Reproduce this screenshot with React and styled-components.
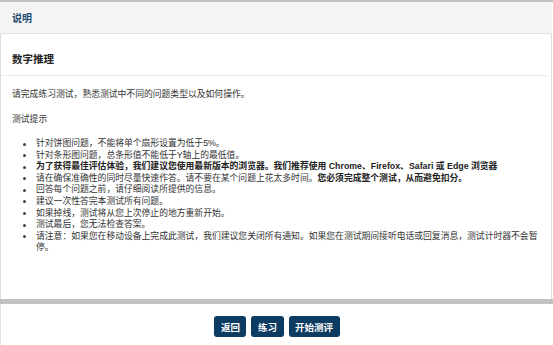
import React from "react";
import styled, { createGlobalStyle } from "styled-components";

const GlobalStyle = createGlobalStyle`
  html, body {
    margin: 0;
    padding: 0;
    background: #fff;
  }
  body {
    font-family: "Liberation Sans", "Noto Sans CJK SC", sans-serif;
    color: #333;
  }
`;

const tips = [
  { text: "针对饼图问题，不能将单个扇形设置为低于5%。" },
  { text: "针对条形图问题，总条形值不能低于Y轴上的最低值。" },
  {
    text: "为了获得最佳评估体验，我们建议您使用最新版本的浏览器。我们推荐使用 Chrome、Firefox、Safari 或 Edge 浏览器",
    strong: true,
  },
  {
    text: "请在确保准确性的同时尽量快速作答。请不要在某个问题上花太多时间。",
    extra: "您必须完成整个测试，从而避免扣分。",
  },
  { text: "回答每个问题之前，请仔细阅读所提供的信息。" },
  { text: "建议一次性答完本测试所有问题。" },
  { text: "如果掉线，测试将从您上次停止的地方重新开始。" },
  { text: "测试最后，您无法检查答案。" },
  {
    text: "请注意：如果您在移动设备上完成此测试，我们建议您关闭所有通知。如果您在测试期间接听电话或回复消息，测试计时器不会暂停。",
  },
];

const App = () => {
  return (
    <>
      <GlobalStyle />
      <Page>
        <Header>说明</Header>
        <Body>
          <TitleRow>数字推理</TitleRow>
          <Content>
            <Para>请完成练习测试，熟悉测试中不同的问题类型以及如何操作。</Para>
            <Para>测试提示</Para>
            <TipList>
              {tips.map((tip, i) => (
                <Tip key={i}>
                  <Dot />
                  <TipText $strong={tip.strong}>
                    {tip.text}
                    {tip.extra && <b>{tip.extra}</b>}
                  </TipText>
                </Tip>
              ))}
            </TipList>
          </Content>
        </Body>
        <Divider />
        <Footer>
          <Button>返回</Button>
          <Button>练习</Button>
          <Button>开始测评</Button>
        </Footer>
      </Page>
    </>
  );
};

const Page = styled.div`
  height: 100vh;
  display: flex;
  flex-direction: column;
  border-top: 2px solid #c4c4c4;
  box-sizing: border-box;
`;

const Header = styled.div`
  height: 32px;
  flex-shrink: 0;
  display: flex;
  align-items: center;
  padding: 0 12px;
  margin-right: 1px;
  background: #f4f4f4;
  border-bottom: 1px solid #e4e4e4;
  box-sizing: border-box;
  color: #1e4a74;
  font-size: 10px;
  font-weight: bold;
`;

const Body = styled.div`
  flex: 1;
  border-left: 1px solid #dcdcdc;
  border-right: 1px solid #dcdcdc;
  margin-right: 1px;
  background: #fff;
`;

const TitleRow = styled.div`
  padding: 18px 12px 9px 11px;
  margin-right: 3px;
  border-bottom: 1px solid #ebebeb;
  font-size: 10.5px;
  line-height: 14px;
  font-weight: bold;
  color: #222;
`;

const Content = styled.div`
  padding: 12px 11px 0 11px;
  font-size: 8.8px;
  line-height: 12px;
`;

const Para = styled.p`
  margin: 0 0 13px;
`;

const TipList = styled.ul`
  list-style: none;
  margin: 0;
  padding: 0 0 0 10px;
  line-height: 11.6px;
`;

const Tip = styled.li`
  display: flex;
  align-items: flex-start;
`;

const Dot = styled.span`
  flex-shrink: 0;
  width: 3px;
  height: 3px;
  margin: 4.5px 10px 0 1px;
  border-radius: 50%;
  background: #444;
`;

const TipText = styled.span`
  font-weight: ${(p) => (p.$strong ? "bold" : "normal")};
  color: ${(p) => (p.$strong ? "#222" : "#333")};
  b {
    color: #222;
  }
`;

const Divider = styled.div`
  height: 5px;
  flex-shrink: 0;
  background: #c2c2c2;
`;

const Footer = styled.div`
  height: 41px;
  flex-shrink: 0;
  display: flex;
  justify-content: center;
  align-items: flex-start;
  gap: 5px;
  padding-top: 12px;
  box-sizing: border-box;
  border-left: 1px solid #e2e2e2;
`;

const Button = styled.button`
  height: 21px;
  padding: 0 6.5px;
  border: none;
  border-radius: 3px;
  background: #0d3c63;
  color: #fff;
  font-family: "Liberation Sans", "Noto Sans CJK SC", sans-serif;
  font-size: 9.5px;
  font-weight: bold;
  cursor: pointer;
`;

export default App;
